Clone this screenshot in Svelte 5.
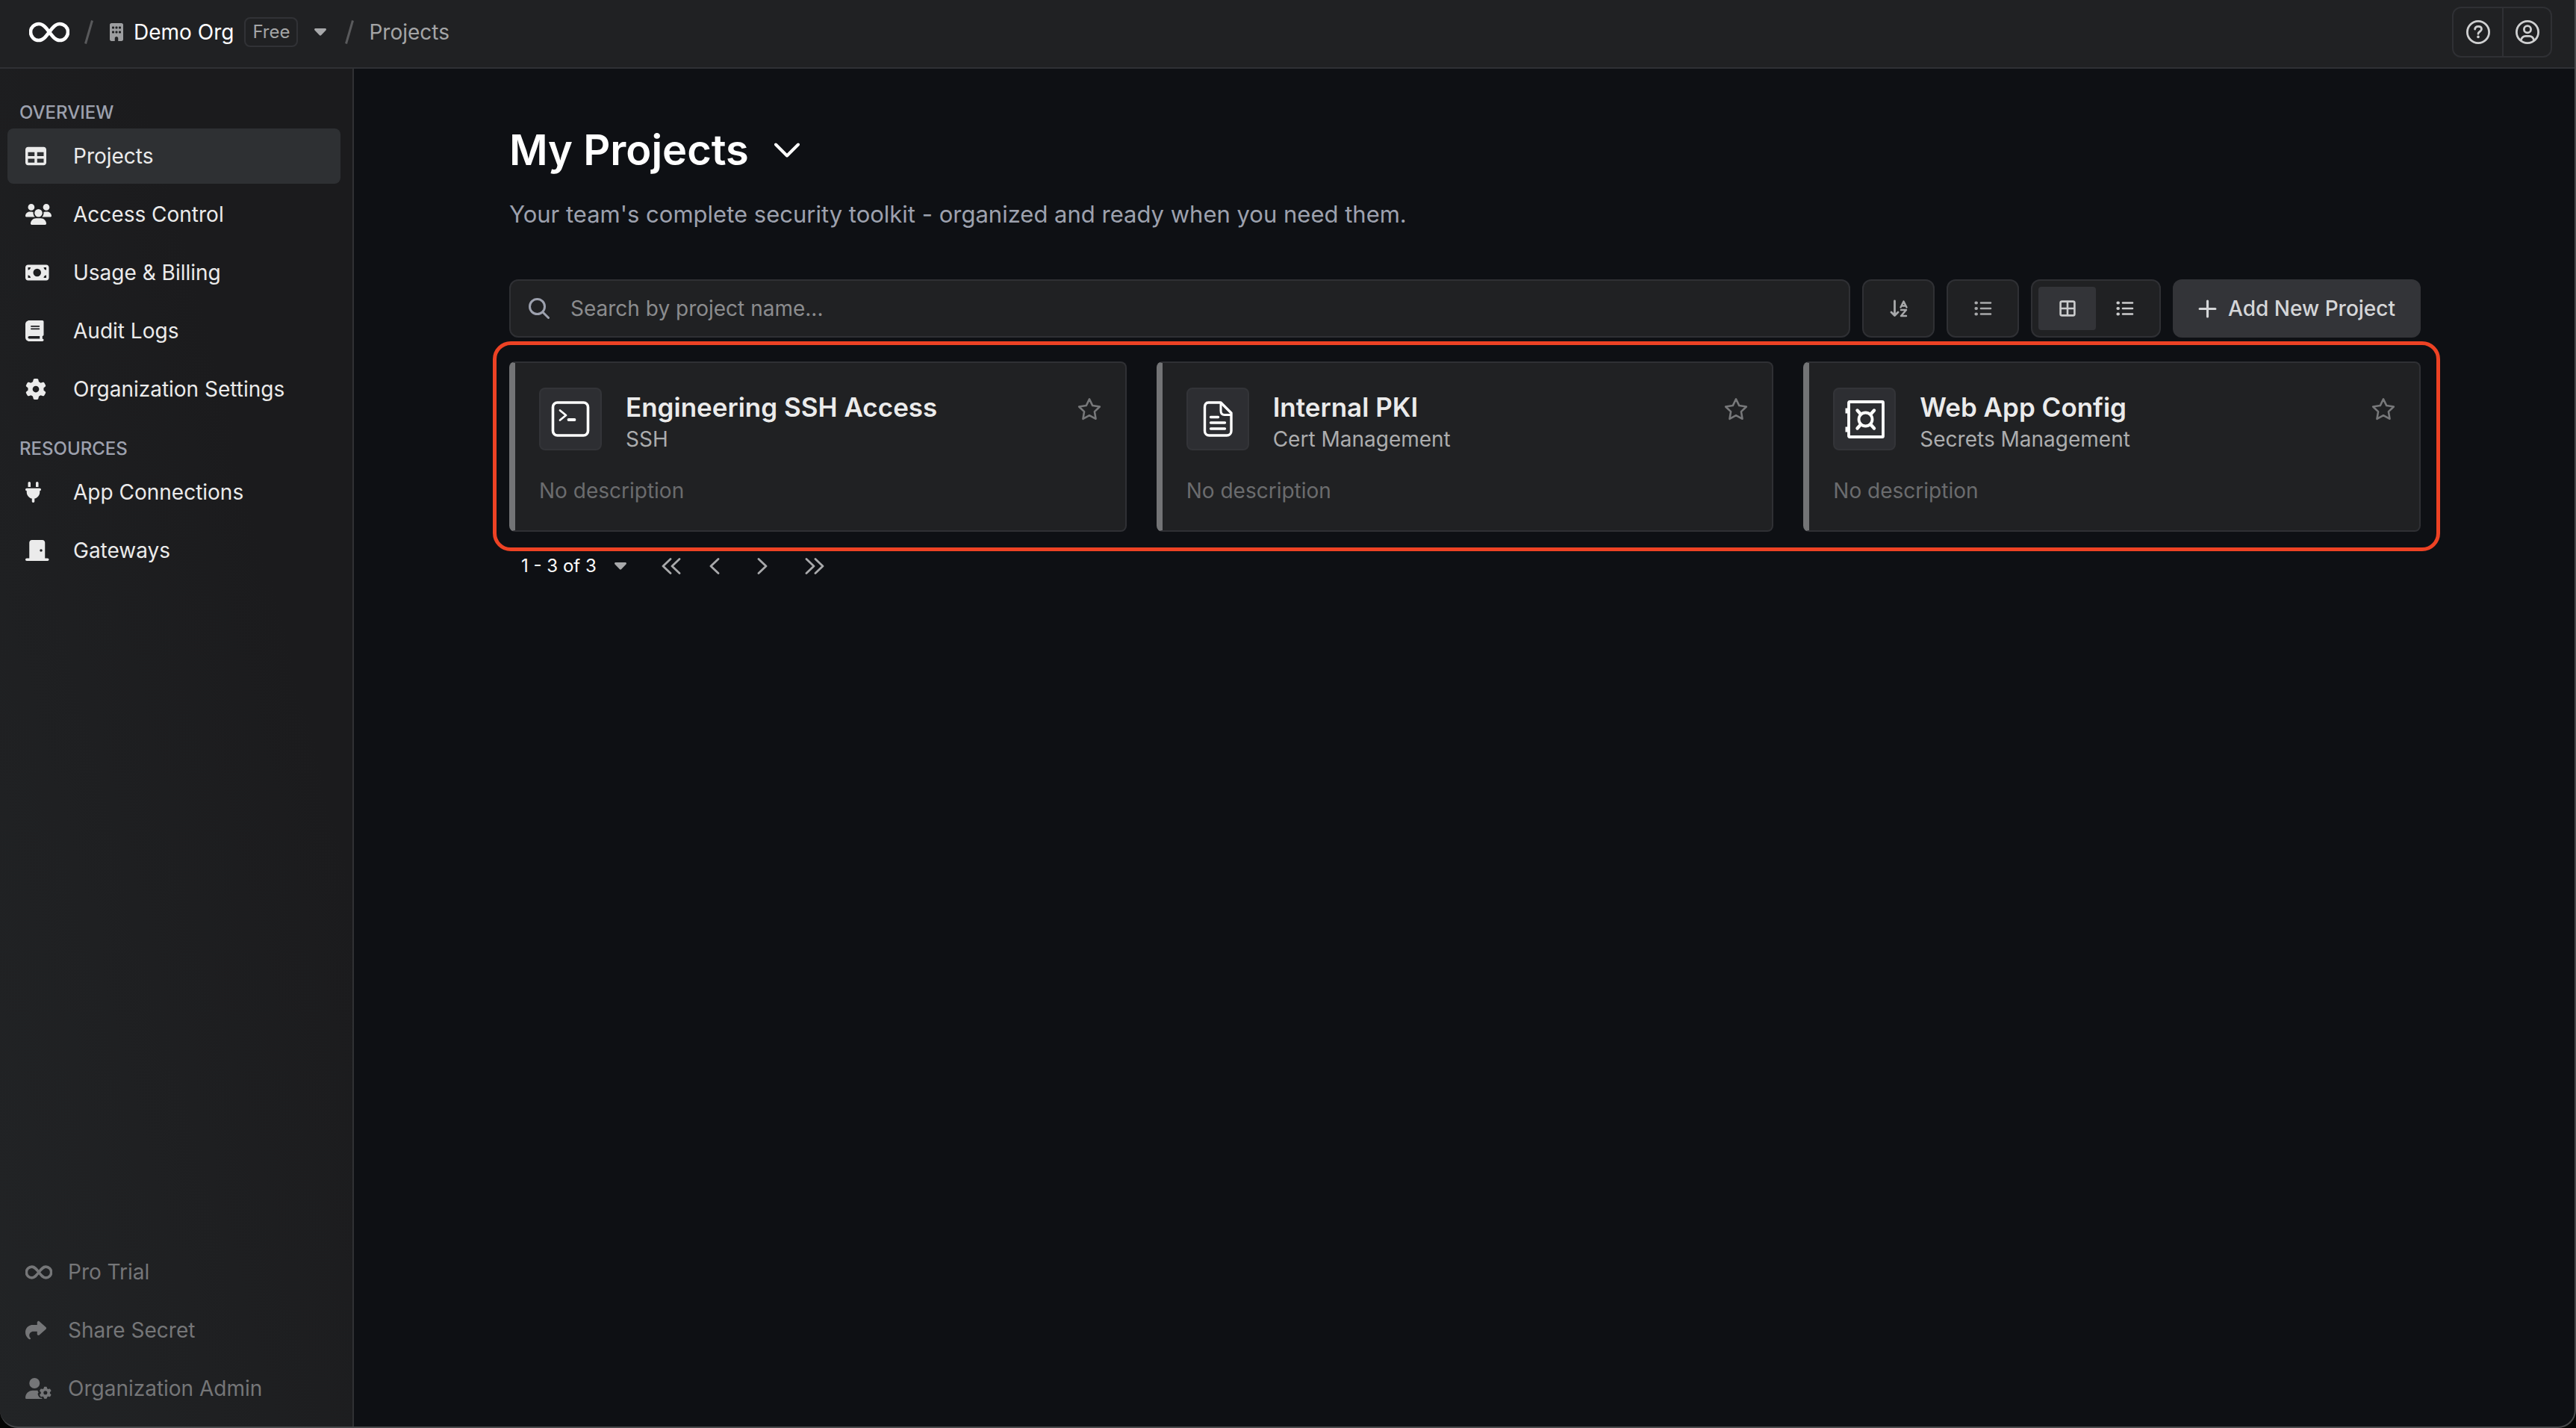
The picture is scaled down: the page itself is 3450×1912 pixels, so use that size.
<script>
    const gear = 'M495.9 166.6c3.2 8.7 .5 18.4-6.4 24.6l-43.3 39.4c1.1 8.3 1.7 16.8 1.7 25.4s-.6 17.1-1.7 25.4l43.3 39.4c6.9 6.2 9.6 15.9 6.4 24.6c-4.4 11.9-9.7 23.3-15.8 34.3l-4.7 8.1c-6.6 11-14 21.4-22.1 31.2c-5.9 7.2-15.7 9.6-24.5 6.8l-55.7-17.7c-13.4 10.3-28.2 18.9-44 25.4l-12.5 57.1c-2 9.1-9 16.3-18.2 17.8c-13.8 2.3-28 3.5-42.5 3.5s-28.7-1.2-42.5-3.5c-9.2-1.5-16.2-8.7-18.2-17.8l-12.5-57.1c-15.8-6.5-30.6-15.1-44-25.4L83.1 425.9c-8.8 2.8-18.6 .3-24.5-6.8c-8.1-9.8-15.5-20.2-22.1-31.2l-4.7-8.1c-6.1-11-11.4-22.4-15.8-34.3c-3.2-8.7-.5-18.4 6.4-24.6l43.3-39.4C64.6 273.1 64 264.6 64 256s.6-17.1 1.7-25.4L22.4 191.2c-6.9-6.2-9.6-15.9-6.4-24.6c4.4-11.9 9.7-23.3 15.8-34.3l4.7-8.1c6.6-11 14-21.4 22.1-31.2c5.9-7.2 15.7-9.6 24.5-6.8l55.7 17.7c13.4-10.3 28.2-18.9 44-25.4l12.5-57.1c2-9.1 9-16.3 18.2-17.8C227.3 1.2 241.5 0 256 0s28.7 1.2 42.5 3.5c9.2 1.5 16.2 8.7 18.2 17.8l12.5 57.1c15.8 6.5 30.6 15.1 44 25.4l55.7-17.7c8.8-2.8 18.6-.3 24.5 6.8c8.1 9.8 15.5 20.2 22.1 31.2l4.7 8.1c6.1 11 11.4 22.4 15.8 34.3zM256 336a80 80 0 1 0 0-160 80 80 0 1 0 0 160z';

    // filled glyphs: [viewBox width, path], all 512 high
    const glyphs = {
        building: [384, 'M48 0C21.5 0 0 21.5 0 48V464c0 26.5 21.5 48 48 48h96V432c0-26.5 21.5-48 48-48s48 21.5 48 48v80h96c26.5 0 48-21.5 48-48V48c0-26.5-21.5-48-48-48H48zM64 240c0-8.8 7.2-16 16-16h32c8.8 0 16 7.2 16 16v32c0 8.8-7.2 16-16 16H80c-8.8 0-16-7.2-16-16V240zm112-16h32c8.8 0 16 7.2 16 16v32c0 8.8-7.2 16-16 16H176c-8.8 0-16-7.2-16-16V240c0-8.8 7.2-16 16-16zm80 16c0-8.8 7.2-16 16-16h32c8.8 0 16 7.2 16 16v32c0 8.8-7.2 16-16 16H272c-8.8 0-16-7.2-16-16V240zM80 96h32c8.8 0 16 7.2 16 16v32c0 8.8-7.2 16-16 16H80c-8.8 0-16-7.2-16-16V112c0-8.8 7.2-16 16-16zm80 16c0-8.8 7.2-16 16-16h32c8.8 0 16 7.2 16 16v32c0 8.8-7.2 16-16 16H176c-8.8 0-16-7.2-16-16V112zM272 96h32c8.8 0 16 7.2 16 16v32c0 8.8-7.2 16-16 16H272c-8.8 0-16-7.2-16-16V112c0-8.8 7.2-16 16-16z'],
        table: [512, 'M64 256V160H224v96H64zm0 64H224v96H64V320zm224 96V320H448v96H288zM448 256H288V160H448v96zM64 32C28.7 32 0 60.7 0 96V416c0 35.3 28.7 64 64 64H448c35.3 0 64-28.7 64-64V96c0-35.3-28.7-64-64-64H64z'],
        users: [640, 'M144 0a80 80 0 1 1 0 160A80 80 0 1 1 144 0zM512 0a80 80 0 1 1 0 160A80 80 0 1 1 512 0zM0 298.7C0 239.8 47.8 192 106.7 192h42.7c15.9 0 31 3.5 44.6 9.7c-1.3 7.2-1.9 14.7-1.9 22.3c0 38.2 16.8 72.5 43.3 96c-.2 0-.4 0-.7 0H21.3C9.6 320 0 310.4 0 298.7zM405.3 320c-.2 0-.4 0-.7 0c26.6-23.5 43.3-57.8 43.3-96c0-7.6-.7-15-1.9-22.3c13.6-6.3 28.7-9.7 44.6-9.7h42.7C592.2 192 640 239.8 640 298.7c0 11.8-9.6 21.3-21.3 21.3H405.3zM224 224a96 96 0 1 1 192 0 96 96 0 1 1 -192 0zM128 485.3C128 411.7 187.7 352 261.3 352H378.7C452.3 352 512 411.7 512 485.3c0 14.7-11.9 26.7-26.7 26.7H154.7c-14.7 0-26.7-11.9-26.7-26.7z'],
        money: [576, 'M64 64C28.7 64 0 92.7 0 128V384c0 35.3 28.7 64 64 64H512c35.3 0 64-28.7 64-64V128c0-35.3-28.7-64-64-64H64zm64 320H64V320c35.3 0 64 28.7 64 64zM64 192V128h64c0 35.3-28.7 64-64 64zM448 384c0-35.3 28.7-64 64-64v64H448zm64-192c-35.3 0-64-28.7-64-64h64v64zM288 160a96 96 0 1 1 0 192 96 96 0 1 1 0-192z'],
        book: [448, 'M96 0C43 0 0 43 0 96V416c0 53 43 96 96 96H384h32c17.7 0 32-14.3 32-32s-14.3-32-32-32V384c17.7 0 32-14.3 32-32V32c0-17.7-14.3-32-32-32H384 96zm0 384H352v64H96c-17.7 0-32-14.3-32-32s14.3-32 32-32zm32-240c0-8.8 7.2-16 16-16H336c8.8 0 16 7.2 16 16s-7.2 16-16 16H144c-8.8 0-16-7.2-16-16zm16 48H336c8.8 0 16 7.2 16 16s-7.2 16-16 16H144c-8.8 0-16-7.2-16-16s7.2-16 16-16z'],
        gear: [512, gear],
        plug: [384, 'M96 0C78.3 0 64 14.3 64 32v96h64V32c0-17.7-14.3-32-32-32zM288 0c-17.7 0-32 14.3-32 32v96h64V32c0-17.7-14.3-32-32-32zM32 160c-17.7 0-32 14.3-32 32s14.3 32 32 32v32c0 77.4 55 142 128 156.8V480c0 17.7 14.3 32 32 32s32-14.3 32-32V412.8C297 398 352 333.4 352 256V224c17.7 0 32-14.3 32-32s-14.3-32-32-32H32z'],
        door: [576, 'M96 64c0-35.3 28.7-64 64-64H416c35.3 0 64 28.7 64 64V448h64c17.7 0 32 14.3 32 32s-14.3 32-32 32H432 144 32c-17.7 0-32-14.3-32-32s14.3-32 32-32H96V64zM384 288a32 32 0 1 0 0-64 32 32 0 1 0 0 64z'],
        share: [512, 'M307 34.8c-11.5 5.1-19 16.6-19 29.2v64H176C78.8 128 0 206.8 0 304C0 417.3 81.5 467.9 100.2 478.1c2.5 1.4 5.3 1.9 8.1 1.9c10.9 0 19.7-8.9 19.7-19.7c0-7.5-4.3-14.4-9.8-19.5C108.8 431.9 96 414.4 96 384c0-53 43-96 96-96h96v64c0 12.6 7.4 24.1 19 29.2s25 3 34.4-5.4l160-144c6.7-6.1 10.6-14.7 10.6-23.8s-3.8-17.7-10.6-23.8l-160-144c-9.4-8.5-22.9-10.6-34.4-5.4z'],
    };

    const sections = [
        {
            title: 'Overview',
            items: [
                { label: 'Projects', icon: 'table' },
                { label: 'Access Control', icon: 'users' },
                { label: 'Usage & Billing', icon: 'money' },
                { label: 'Audit Logs', icon: 'book' },
                { label: 'Organization Settings', icon: 'gear' },
            ],
        },
        {
            title: 'Resources',
            items: [
                { label: 'App Connections', icon: 'plug' },
                { label: 'Gateways', icon: 'door' },
            ],
        },
    ];

    const footerItems = [
        { label: 'Pro Trial', icon: 'infinity' },
        { label: 'Share Secret', icon: 'share' },
        { label: 'Organization Admin', icon: 'admin' },
    ];

    const projects = [
        { name: 'Engineering SSH Access', type: 'SSH', icon: 'terminal' },
        { name: 'Internal PKI', type: 'Cert Management', icon: 'note' },
        { name: 'Web App Config', type: 'Secrets Management', icon: 'vault' },
    ];

    let search = $state('');
    let view = $state('grid');
    let active = $state('Projects');

    let filtered = $derived(
        projects.filter((p) => p.name.toLowerCase().includes(search.toLowerCase()))
    );
</script>

{#snippet icon(name)}
    {#if name === 'infinity'}
        <svg class="infinity" viewBox="0 0 54 28" aria-hidden="true">
            <path d="M27 14C22 7.500 18.500 3 13 3a11 11 0 0 0 0 22C18.500 25 22 20.500 27 14S35.500 3 41 3a11 11 0 0 1 0 22C35.500 25 32 20.500 27 14z" />
        </svg>
    {:else if name === 'admin'}
        <svg class="glyph" viewBox="0 0 640 512" aria-hidden="true">
            <path d="M224 0a128 128 0 1 1 0 256A128 128 0 1 1 224 0zM178.300 304h91.400c11.800 0 23.400 1.200 34.500 3.300c-2.100 18.500 7.400 35.600 21.800 44.800c-16.600 10.600-26.700 31.600-20 53.300c4 12.900 9.400 25.500 16.400 37.600s15.200 23.100 24.400 33c15.700 16.900 39.600 18.400 57.200 8.700v.9c0 9.200 2.700 18.500 7.900 26.300H29.700C13.300 512 0 498.700 0 482.300C0 383.800 79.800 304 178.300 304z" />
            <path transform="translate(342 214) scale(.58)" d={gear} />
        </svg>
    {:else}
        <svg class="glyph" viewBox="0 0 {glyphs[name][0]} 512" aria-hidden="true">
            <path d={glyphs[name][1]} />
        </svg>
    {/if}
{/snippet}

{#snippet caret()}
    <svg class="caret" viewBox="0 0 16 10" aria-hidden="true">
        <path d="M1.500 0h13c1.300 0 1.900 1.500 1 2.400L9 9.300c-.6.600-1.400.6-2 0L.5 2.400C-.4 1.500.2 0 1.500 0z" />
    </svg>
{/snippet}

{#snippet listIcon()}
    <svg class="tool" viewBox="0 0 24 24" aria-hidden="true">
        <path d="M9 4.500h13M9 12h13M9 19.500h13" stroke-width="2.600" />
        <path d="M2.500 4.500h.4M2.500 12h.4M2.500 19.500h.4" stroke-width="4.200" />
    </svg>
{/snippet}

<div class="app">
    <header class="topbar">
        <nav class="crumbs" aria-label="Breadcrumb">
            <a class="logo" href="#home" aria-label="Home">{@render icon('infinity')}</a>
            <svg class="slash" viewBox="0 0 12 34" aria-hidden="true"><path d="M10.500 1.500L1.500 32.500" /></svg>
            <a class="org" href="#org">
                {@render icon('building')}
                <span>Demo Org</span>
                <span class="badge">Free</span>
            </a>
            <button class="org-menu" aria-label="Switch organization">{@render caret()}</button>
            <svg class="slash" viewBox="0 0 12 34" aria-hidden="true"><path d="M10.500 1.500L1.500 32.500" /></svg>
            <a class="current" href="#projects">Projects</a>
        </nav>
        <div class="account">
            <button aria-label="Help">
                <svg viewBox="0 0 32 32" aria-hidden="true">
                    <circle cx="16" cy="16" r="14.600" />
                    <path d="M11.600 12c.3-2.200 2-3.600 4.500-3.600 2.600 0 4.400 1.500 4.400 3.700 0 3.200-4.500 3.100-4.500 6.200" />
                    <path d="M16 22.300v.2" stroke-width="3.600" />
                </svg>
            </button>
            <button aria-label="Account">
                <svg viewBox="0 0 32 32" aria-hidden="true">
                    <circle cx="16" cy="16" r="14.600" />
                    <circle cx="16" cy="12.300" r="4.600" />
                    <path d="M7.300 27c.8-3.500 3.300-5.700 6.200-5.700h5c2.900 0 5.400 2.200 6.200 5.700" />
                </svg>
            </button>
        </div>
    </header>

    <div class="body">
        <aside class="sidebar">
            <nav aria-label="Main">
                {#each sections as section}
                    <section>
                        <h2>{section.title}</h2>
                        <ul>
                            {#each section.items as item}
                                <li>
                                    <a
                                        class="nav-item"
                                        class:active={active === item.label}
                                        href="#{item.icon}"
                                        onclick={() => active = item.label}
                                    >
                                        <span class="slot">{@render icon(item.icon)}</span>
                                        {item.label}
                                    </a>
                                </li>
                            {/each}
                        </ul>
                    </section>
                {/each}
            </nav>
            <ul class="bottom">
                {#each footerItems as item}
                    <li>
                        <a class="nav-item" href="#{item.icon}">
                            <span class="slot">{@render icon(item.icon)}</span>
                            {item.label}
                        </a>
                    </li>
                {/each}
            </ul>
        </aside>

        <main>
            <div class="content">
                <div class="title-row">
                    <h1>My Projects</h1>
                    <button aria-label="Change project view">
                        <svg class="chevron" viewBox="0 0 34 20" aria-hidden="true"><path d="M2 2.500L17 17.500L32 2.500" /></svg>
                    </button>
                </div>
                <p class="subtitle">Your team's complete security toolkit - organized and ready when you need them.</p>

                <div class="toolbar">
                    <label class="search">
                        <svg viewBox="0 0 28 28" aria-hidden="true">
                            <circle cx="11.500" cy="11.500" r="10" />
                            <path d="M19 19l7.500 7.500" />
                        </svg>
                        <input type="text" placeholder="Search by project name..." aria-label="Search by project name" bind:value={search} />
                    </label>
                    <button class="square" aria-label="Sort by name">
                        <svg class="tool" viewBox="0 0 24 24" aria-hidden="true">
                            <path d="M6.500 2v19M2 17l4.500 4.500L11 17" stroke-width="2.800" />
                            <path d="M14.500 10.500L18.500 2.500l4 8M15.800 8.500h5.400M15 14h7l-7 8h7" stroke-width="2.400" />
                        </svg>
                    </button>
                    <button class="square" aria-label="Filter by type">{@render listIcon()}</button>
                    <div class="views">
                        <button class:on={view === 'grid'} aria-label="Grid view" onclick={() => view = 'grid'}>
                            <svg class="tool" viewBox="0 0 24 24" aria-hidden="true">
                                <rect x="2.600" y="2.600" width="18.800" height="18.800" rx="2" stroke-width="2.600" />
                                <path d="M12 3v18M3 12h18" stroke-width="2.600" />
                            </svg>
                        </button>
                        <button class:on={view === 'list'} aria-label="List view" onclick={() => view = 'list'}>
                            {@render listIcon()}
                        </button>
                    </div>
                    <button class="add">
                        <svg viewBox="0 0 24 24" aria-hidden="true"><path d="M12 2v20M2 12h20" /></svg>
                        Add New Project
                    </button>
                </div>

                <div class="cards">
                    {#each filtered as project}
                        <article class="card">
                            <div class="card-head">
                                <div class="card-icon">
                                    {#if project.icon === 'terminal'}
                                        <svg viewBox="0 0 60 60" aria-hidden="true">
                                            <rect x="6.500" y="8" width="47" height="44" rx="6" stroke-width="3.600" />
                                            <path d="M16 18.500l8 6.500-8 6.500" stroke-width="2.800" />
                                            <path d="M27.500 31h8" stroke-width="3.800" />
                                        </svg>
                                    {:else if project.icon === 'note'}
                                        <svg viewBox="0 0 60 60" aria-hidden="true">
                                            <path d="M17.500 8h16.500L48 22v24c0 3.500-2.500 6-6 6H18.500c-3.500 0-6-2.500-6-6V14c0-3.500 1.500-6 5-6z" stroke-width="3.400" />
                                            <path d="M34 8.500V19c0 3.500 1.500 5.500 5 5.500h8.500" stroke-width="3" />
                                            <path d="M20.500 27.500h10M20.500 35h19M20.500 43h19" stroke-width="3.400" />
                                        </svg>
                                    {:else}
                                        <svg viewBox="0 0 60 60" aria-hidden="true">
                                            <rect x="9" y="7" width="46" height="47" rx="1" stroke-width="3.800" />
                                            <path d="M7 15.500v7M7 40.500v7" stroke-width="5" stroke-linecap="butt" />
                                            <circle cx="31.500" cy="30.500" r="9" stroke-width="3.800" />
                                            <path d="M20.500 18.500l4.500 5M43 18.500l-4.500 5M20.500 42.500l4.500-5M43 42.500l-4.500-5" stroke-width="4.400" />
                                        </svg>
                                    {/if}
                                </div>
                                <div class="card-text">
                                    <h3>{project.name}</h3>
                                    <p>{project.type}</p>
                                </div>
                                <button class="star" aria-label="Favorite {project.name}">
                                    <svg viewBox="0 0 30 30" aria-hidden="true">
                                        <path d="M15 2.200l4 8.200 9 1.300-6.500 6.300 1.500 9-8-4.300-8 4.300 1.500-9L2 11.700l9-1.300z" />
                                    </svg>
                                </button>
                            </div>
                            <p class="description">No description</p>
                        </article>
                    {/each}
                    <div class="highlight"></div>
                </div>

                <div class="pager">
                    <button class="range">1 - 3 of 3 {@render caret()}</button>
                    <div class="steps">
                        <button aria-label="First page">
                            <svg class="wide" viewBox="0 0 26 22" aria-hidden="true"><path d="M12 1.500L2 11l10 9.500M24 1.500L14 11l10 9.500" /></svg>
                        </button>
                        <button aria-label="Previous page">
                            <svg viewBox="0 0 14 22" aria-hidden="true"><path d="M12 1.500L2 11l10 9.500" /></svg>
                        </button>
                        <button class="next" aria-label="Next page">
                            <svg viewBox="0 0 14 22" aria-hidden="true"><path d="M2 1.500L12 11 2 20.500" /></svg>
                        </button>
                        <button aria-label="Last page">
                            <svg class="wide" viewBox="0 0 26 22" aria-hidden="true"><path d="M2 1.500L12 11 2 20.500M14 1.500L24 11l-10 9.500" /></svg>
                        </button>
                    </div>
                </div>
            </div>
        </main>
    </div>
    <div class="frame"></div>
</div>

<style>
    :global(body) {
        margin: 0;
        background: #0e1014;
    }

    .app {
        position: relative;
        display: flex;
        flex-direction: column;
        min-height: 100vh;
        overflow: hidden;
        background: #0e1014;
        color: #ebebeb;
        font-family: Inter, sans-serif;
        font-size: 28px;
        line-height: 40px;
    }

    /* rounded bottom edge of the window */
    .frame {
        position: absolute;
        inset: 0;
        border: solid #48494b;
        border-width: 0 2px 2px 0;
        border-radius: 0 0 24px 24px;
        box-shadow: 0 0 0 24px #050605;
        pointer-events: none;
    }

    h1, h2, h3, p, ul {
        margin: 0;
        padding: 0;
    }

    ul {
        display: flex;
        flex-direction: column;
        gap: 4px;
        list-style: none;
    }

    a {
        color: inherit;
        text-decoration: none;
    }

    button {
        display: flex;
        align-items: center;
        justify-content: center;
        box-sizing: border-box;
        padding: 0;
        border: none;
        background: none;
        color: inherit;
        font: inherit;
        cursor: pointer;
    }

    svg {
        display: block;
        flex-shrink: 0;
        fill: none;
        stroke: currentColor;
        stroke-linecap: round;
        stroke-linejoin: round;
    }

    .glyph, .caret {
        fill: currentColor;
        stroke: none;
    }

    .glyph {
        height: 28px;
    }

    .caret {
        width: 16px;
        height: 10px;
        color: #a8a9ab;
    }

    .topbar {
        display: flex;
        align-items: center;
        justify-content: space-between;
        box-sizing: border-box;
        height: 92px;
        padding: 0 32px 4px 39px;
        border-bottom: 2px solid #2f3034;
        background: #202123;
    }

    .crumbs, .org {
        display: flex;
        align-items: center;
    }

    .logo .infinity {
        width: 54px;
        height: 28px;
        color: #fff;
        stroke-width: 4.6;
    }

    .slash {
        width: 12px;
        height: 34px;
        margin: 0 20px;
        color: #595a5c;
        stroke-width: 3;
        stroke-linecap: butt;
    }

    .org {
        gap: 14px;
        padding-left: 2px;
        color: #fff;
    }

    .org .glyph {
        height: 24px;
        color: #9d9ea0;
    }

    .badge {
        padding: 0 9px;
        border: 2px solid #313236;
        border-radius: 8px;
        color: #a4a5a6;
        font-size: 24px;
        line-height: 36px;
    }

    .org-menu {
        padding: 0 5px 0 22px;
    }

    .current {
        color: #a4a5a6;
    }

    .account {
        display: flex;
        border: 2px solid #2f3034;
        border-radius: 12px;
        color: #cfd0d1;
    }

    .account button {
        width: 65px;
        height: 64px;
    }

    .account button + button {
        border-left: 2px solid #2f3034;
    }

    .account svg {
        width: 32px;
        height: 32px;
        stroke-width: 2.8;
    }

    .body {
        display: flex;
        flex: 1;
    }

    .sidebar {
        display: flex;
        flex-direction: column;
        justify-content: space-between;
        box-sizing: border-box;
        width: 474px;
        padding: 40px 16px 16px 10px;
        border-right: 2px solid #303134;
        background: linear-gradient(to top right, #222426, #1b1b1d 70%);
    }

    section + section {
        margin-top: 24px;
    }

    h2 {
        margin-bottom: 2px;
        padding-left: 16px;
        color: #9da1ae;
        font-size: 24px;
        font-weight: 500;
        line-height: 38px;
        text-transform: uppercase;
    }

    .nav-item {
        display: flex;
        align-items: center;
        height: 74px;
        padding-left: 24px;
        border-radius: 8px;
    }

    .nav-item.active {
        background: #2e3033;
    }

    .slot {
        width: 64px;
    }

    .bottom {
        color: #757678;
    }

    .bottom .slot {
        width: 57px;
    }

    .bottom .infinity {
        width: 36px;
        height: 19px;
        stroke-width: 5.4;
    }

    main {
        flex: 1;
        min-width: 0;
        padding: 72px 48px;
    }

    .content {
        max-width: 2560px;
        margin: 0 auto;
    }

    .title-row {
        display: flex;
        align-items: center;
        gap: 34px;
    }

    h1 {
        color: #fff;
        font-size: 56px;
        font-weight: 600;
        line-height: 74px;
    }

    .chevron {
        width: 34px;
        height: 20px;
        color: #fff;
        stroke-width: 4;
    }

    .subtitle {
        margin-top: 24px;
        color: #9da1ae;
        font-size: 31px;
        line-height: 50px;
    }

    .toolbar {
        display: flex;
        gap: 16px;
        height: 78px;
        margin-top: 62px;
    }

    .search, .square, .views {
        box-sizing: border-box;
        border: 2px solid #2f3034;
        border-radius: 12px;
        background: #202123;
    }

    .search {
        display: flex;
        flex: 1;
        align-items: center;
        gap: 28px;
        padding: 0 24px;
    }

    .search svg {
        width: 28px;
        height: 28px;
        color: #9da1ae;
        stroke-width: 3;
    }

    .search input {
        flex: 1;
        padding: 0;
        border: none;
        outline: none;
        background: none;
        color: #ebebeb;
        font: inherit;
    }

    .search input::placeholder {
        color: #8b8c8e;
        opacity: 1;
    }

    .tool {
        width: 24px;
        height: 24px;
        color: #cbcccd;
    }

    .square {
        width: 97px;
    }

    .square .tool {
        color: #a8a9ab;
    }

    .views {
        display: flex;
        width: 174px;
        padding: 8px;
    }

    .views button {
        width: 77px;
        border-radius: 4px;
    }

    .views .on {
        background: #333438;
    }

    .add {
        gap: 15px;
        padding: 0 34px;
        border-radius: 12px;
        background: #333438;
        color: #d5d6d8;
        font-weight: 500;
    }

    .add svg {
        width: 25px;
        height: 25px;
        stroke-width: 3;
    }

    .cards {
        position: relative;
        display: grid;
        grid-template-columns: repeat(3, 1fr);
        gap: 40px;
        margin-top: 32px;
    }

    .highlight {
        position: absolute;
        inset: -27px -26px -26px -22px;
        border: 5px solid #ed4224;
        border-radius: 24px;
        pointer-events: none;
    }

    .card {
        padding: 33px 32px;
        border: 2px solid #2f3034;
        border-left: 8px solid #737476;
        border-radius: 8px;
        background: #202123;
    }

    .card-head {
        display: flex;
        align-items: flex-start;
        gap: 32px;
    }

    .card-icon {
        display: flex;
        align-items: center;
        justify-content: center;
        box-sizing: border-box;
        width: 84px;
        height: 84px;
        border: 2px solid #333438;
        border-radius: 8px;
        background: #2d2e32;
        color: #fff;
    }

    .card-icon svg {
        width: 60px;
        height: 60px;
    }

    .card-text {
        flex: 1;
        padding-top: 2px;
    }

    h3 {
        font-size: 35px;
        font-weight: 600;
        line-height: 48px;
    }

    .card-text p {
        color: #acadae;
        line-height: 38px;
    }

    .star {
        padding-top: 13px;
        color: #77787a;
    }

    .star svg {
        width: 32px;
        height: 32px;
        stroke-width: 2.4;
    }

    .description {
        margin-top: 30px;
        color: #6b6c6e;
    }

    .pager {
        display: flex;
        align-items: center;
        gap: 47px;
        height: 44px;
        margin-top: 24px;
        padding-left: 16px;
    }

    .range {
        gap: 24px;
        color: #fff;
        font-size: 24px;
    }

    .steps {
        display: flex;
        gap: 38px;
        color: #a8a9ab;
    }

    .steps svg {
        width: 14px;
        height: 22px;
        stroke-width: 2.8;
    }

    .steps .wide {
        width: 26px;
    }

    .steps .next {
        padding: 0 12px;
    }
</style>
